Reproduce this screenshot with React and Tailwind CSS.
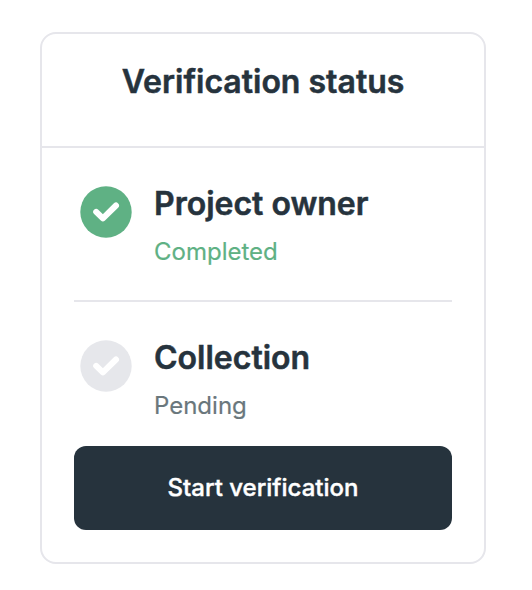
const Check = ({ className }) => (
  <svg className={`size-[52px] shrink-0 ${className}`} viewBox="0 0 52 52" fill="none">
    <circle cx="26" cy="26" r="25.7" fill="currentColor" />
    <path d="M16.2 25.9 L22.9 32.4 L36 19.5" stroke="#fff" strokeWidth="6" strokeLinecap="round" strokeLinejoin="round" />
  </svg>
);

const Step = ({ title, status, statusClass, iconClass }) => (
  <div className="flex pl-[6px]">
    <Check className={iconClass} />
    <div className="ml-[22px]">
      <h3 className="-mt-[2px] text-[32px] leading-[40px] font-semibold whitespace-nowrap [-webkit-text-stroke:0.5px]">{title}</h3>
      <p className={`mt-[12px] text-[24px] leading-[32px] whitespace-nowrap [-webkit-text-stroke:0.2px] ${statusClass}`}>{status}</p>
    </div>
  </div>
);

export default function App() {
  return (
    <main className="h-[590px] w-[532px] bg-white pt-8 pl-10 font-['Inter',sans-serif] text-[#26333d]">
      <section className="h-[532px] w-[446px] rounded-[16px] border-2 border-[#e6e6eb]">
        <header className="h-[114px] border-b-2 border-[#e6e6eb] pt-[28px] text-center">
          <h2 className="text-[32px] leading-[40px] font-semibold [-webkit-text-stroke:0.5px]">Verification status</h2>
        </header>
        <div className="px-8">
          <div className="h-[154px] border-b-2 border-[#e6e6eb] pt-[38px]">
            <Step title="Project owner" status="Completed" statusClass="text-[#5fb184]" iconClass="text-[#5fb184]" />
          </div>
          <div className="h-[144px] pt-[38px]">
            <Step title="Collection" status="Pending" statusClass="text-[#6a777c]" iconClass="text-[#e6e7eb]" />
          </div>
          <button className="block h-[84px] w-full rounded-[12px] bg-[#26333d] text-[24px] font-medium text-white [-webkit-text-stroke:0.4px]">
            Start verification
          </button>
        </div>
      </section>
    </main>
  );
}
